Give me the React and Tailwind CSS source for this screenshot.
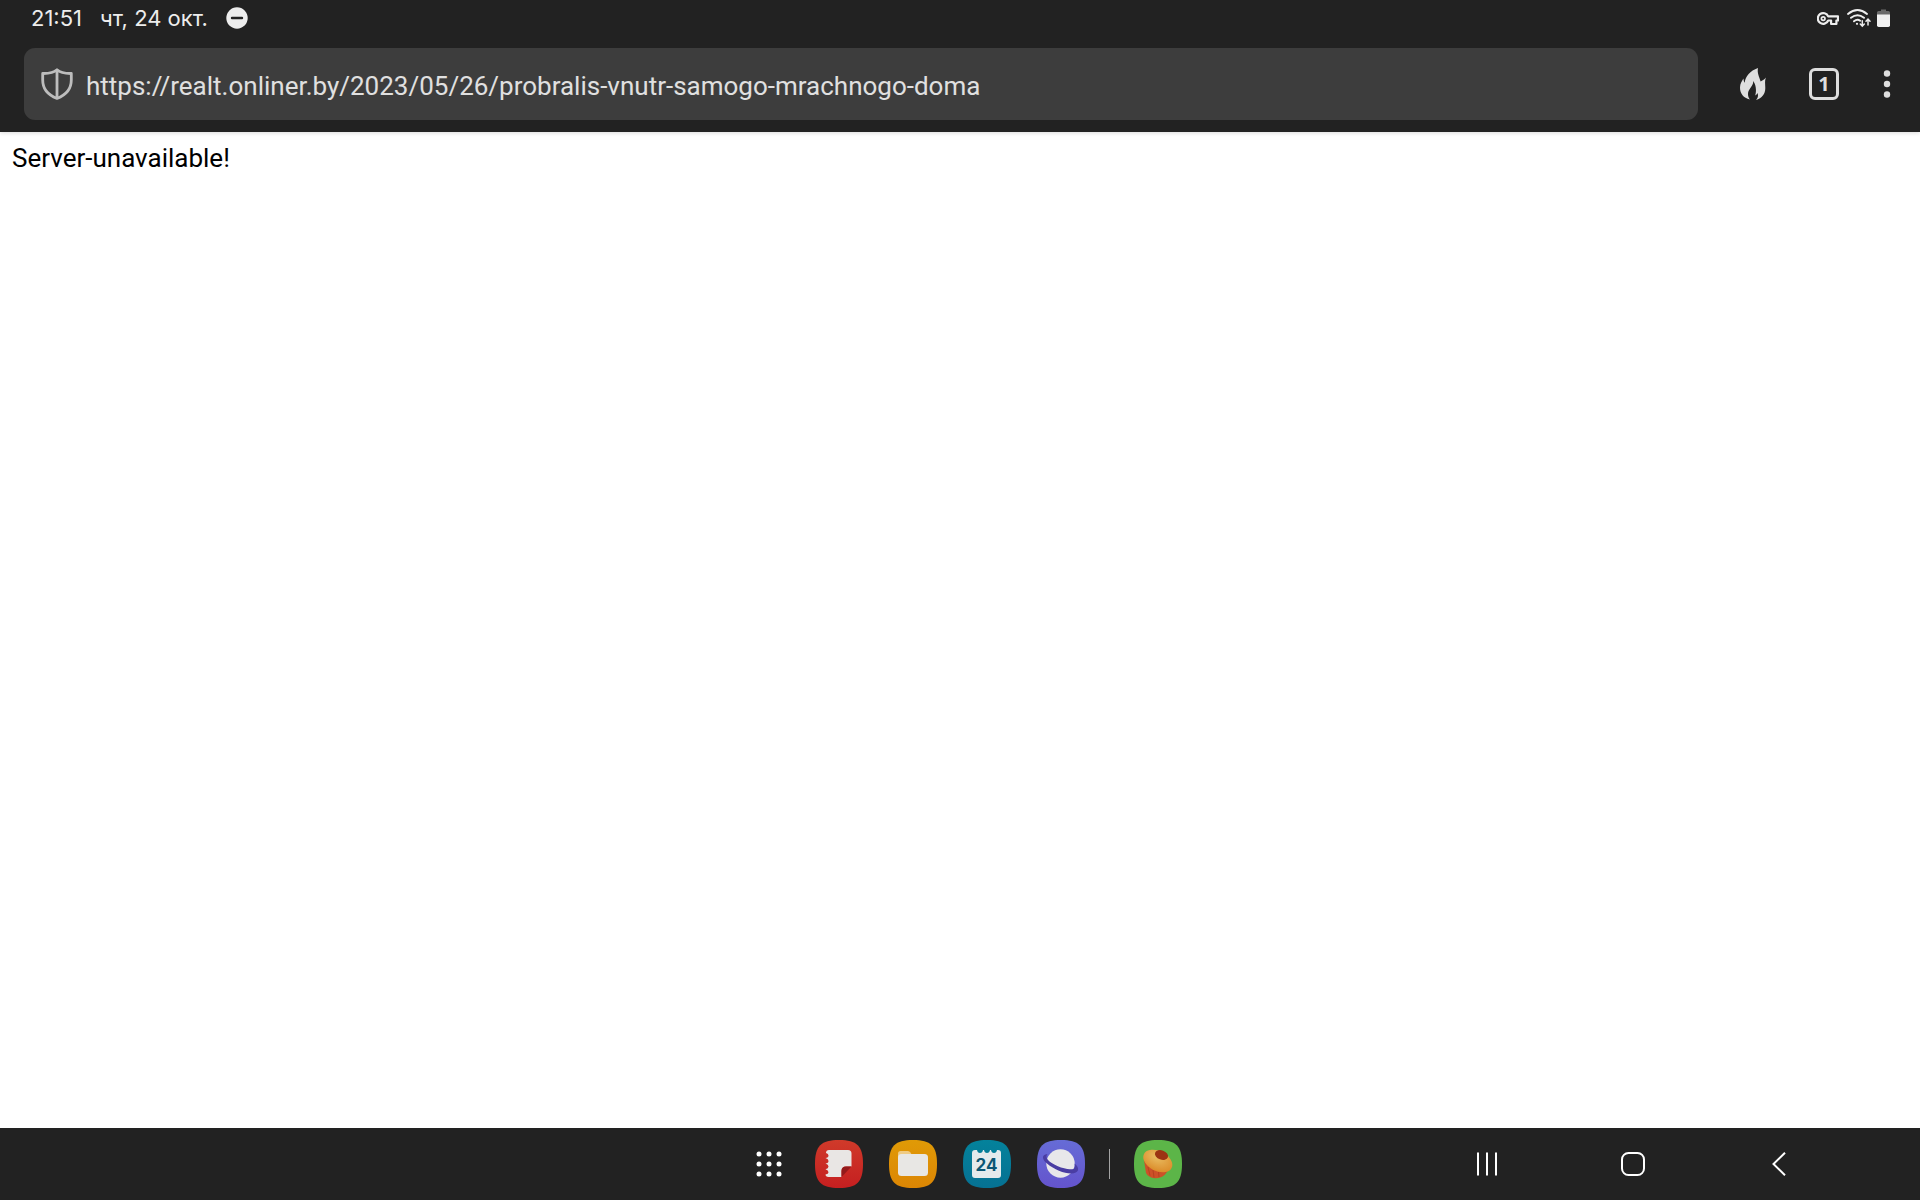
const SQUIRCLE = "M24 0C42 0 48 6 48 24S42 48 24 48 0 42 0 24 6 0 24 0Z";

function StatusBar() {
  return (
    <div className="flex h-9 items-center justify-between pl-[31px] pr-[30px] font-['Inter',sans-serif] text-[22px] leading-9 text-[#ededed]">
      <div className="flex items-center">
        <time>21:51</time>
        <span className="ml-[18px]">чт, 24 окт.</span>
        <svg className="ml-[18px] size-[22px]" viewBox="0 0 22 22" aria-hidden="true">
          <circle cx="11" cy="11" r="10.7" fill="#ededed" />
          <path d="M6 11h10" stroke="#222" strokeWidth="2.4" strokeLinecap="round" />
        </svg>
      </div>
      <div className="flex items-center">
        <svg className="h-5 w-[22px]" viewBox="0 0 22 20" fill="none" stroke="#ededed" aria-hidden="true">
          <path
            d="M11.2 8.4H21v4.1h-1.6V16h-5.3v-3.5h-2.9A5.4 5.4 0 1 1 11.2 8.4Z"
            strokeWidth="2.2"
            strokeLinejoin="round"
          />
          <circle cx="6.2" cy="10.6" r="1.8" strokeWidth="1.7" />
        </svg>
        <svg className="ml-2 h-5 w-6" viewBox="0 0 24 20" fill="none" stroke="#ededed" strokeLinecap="round" aria-hidden="true">
          <path d="M1 6Q10.5-1.8 20 6M4 9.8Q10.5 4.6 17 9.8M7 13.3Q10.2 10.6 13.2 12.8" strokeWidth="1.9" />
          <circle cx="10" cy="15.8" r="1.1" fill="#ededed" stroke="none" />
          <path d="M15.3 12.8v5M13.3 16l2 2.2 2-2.2M21 17v-5.4M19 13.2l2-2.2 2 2.2" strokeWidth="1.5" />
        </svg>
        <svg className="ml-1.5 h-5 w-[13px]" viewBox="0 0 13 20" aria-hidden="true">
          <path d="M4 1.5h5V3h2.500a1.500 1.500 0 0 1 1.500 1.500V7H0V4.500A1.500 1.500 0 0 1 1.500 3H4Z" fill="#6b6b6b" />
          <path d="M0 6.500h13v10.800a1.700 1.700 0 0 1-1.700 1.700H1.700A1.700 1.700 0 0 1 0 17.300Z" fill="#f1f1f1" />
        </svg>
      </div>
    </div>
  );
}

function Toolbar() {
  return (
    <div className="flex h-24 items-center pl-6 pr-[5px] text-[#dedede]">
      <label className="mr-[19px] flex h-[72px] flex-1 items-center rounded-[11px] bg-[#3d3d3d] pl-[17px]">
        <svg className="size-8 shrink-0" viewBox="0 0 32 32" fill="none" stroke="#bdbdbd" strokeWidth="2.8" strokeLinejoin="round" aria-hidden="true">
          <path d="M16 1.8C12.3 5.2 7.5 5.6 1.7 5.5V12c0 9 5.300 15 14.300 18.400C25 27 30.300 21 30.300 12V5.500C24.500 5.600 19.700 5.200 16 1.800Z" />
          <path d="M16 2v28" />
        </svg>
        <input
          type="text"
          aria-label="Address"
          defaultValue="https://realt.onliner.by/2023/05/26/probralis-vnutr-samogo-mrachnogo-doma"
          className="ml-[13px] h-full min-w-0 flex-1 bg-transparent pt-[3px] font-['Roboto',sans-serif] text-[26px] text-[#e0e0e0] outline-none"
        />
      </label>
      <button type="button" aria-label="Clear data" className="flex h-[72px] w-[72px] items-center justify-center">
        <svg className="h-8 w-[26px]" viewBox="0 0 26 32" fill="currentColor" aria-hidden="true">
          <path d="M18 0c-1 5 1 8 2.600 13.500 1.600-.8 3.600-1.800 5.300-4-1.400 3.500-.6 6-.6 10.500 0 6-3.300 10-9.300 12 1.200-1.200 2-2.800 2-4.500 0-.8-.2-1.600-.5-2.400-.5 1.200-1.200 1.900-2.300 2.400 1.600-5 .6-11-2-14.500.4 5.500-5.200 7.500-5.200 13 0 2.200.6 4 1.900 5.500C3.500 30 0 25.500 0 19.500 0 15.500 2 13 3.400 10.500c.2 2 .6 3.200 1.300 4.300C5.500 8 10 3 18 0Z" />
        </svg>
      </button>
      <button type="button" aria-label="Tabs" className="flex h-[72px] w-[70px] items-center justify-center">
        <span className="flex h-8 w-[30px] items-center justify-center rounded-md border-[3px] border-[#dedede] font-['Open_Sans',sans-serif] text-[20px] font-bold leading-none">
          1
        </span>
      </button>
      <button type="button" aria-label="Menu" className="flex h-[72px] w-14 items-center justify-center">
        <svg className="h-7 w-2" viewBox="0 0 8 28" fill="currentColor" aria-hidden="true">
          <circle cx="4" cy="3.5" r="3.2" />
          <circle cx="4" cy="14" r="3.2" />
          <circle cx="4" cy="24.5" r="3.2" />
        </svg>
      </button>
    </div>
  );
}

function NotesIcon() {
  return (
    <svg className="size-12" viewBox="0 0 48 48" aria-hidden="true">
      <defs>
        <linearGradient id="notes" x2="0" y2="1">
          <stop stopColor="#d03a2a" />
          <stop offset="1" stopColor="#c51f20" />
        </linearGradient>
      </defs>
      <path d={SQUIRCLE} fill="url(#notes)" />
      <path
        d="M14 10H33Q36.500 10 36.500 13.500V26.500H31Q26.500 26.500 26.500 31V37H13.500Q10.500 36.800 10.500 34.500 13.500 34 13.500 32.200T10.500 29.200Q13.500 28.500 13.500 26.500T10.500 23.500Q13.500 23 13.500 21T10.500 18Q13.500 17.500 13.500 15.500T11 13Q11 10 14 10Z"
        fill="#e9e6e4"
      />
      <path d="M36.500 26.500 26.500 37V31Q26.500 26.500 31 26.500Z" fill="#941a1b" />
    </svg>
  );
}

function FilesIcon() {
  return (
    <svg className="size-12" viewBox="0 0 48 48" aria-hidden="true">
      <defs>
        <linearGradient id="files" x2="0" y2="1">
          <stop stopColor="#e09a06" />
          <stop offset="1" stopColor="#dc8604" />
        </linearGradient>
      </defs>
      <path d={SQUIRCLE} fill="url(#files)" />
      <path d="M9 18V13.500Q9 11 11.500 11H19Q20.500 11 21.500 12.500L23 15V20H9Z" fill="#efcb83" />
      <rect x="9" y="14" width="30" height="22" rx="3.5" fill="#e8e7e4" />
    </svg>
  );
}

function CalendarIcon() {
  return (
    <svg className="size-12" viewBox="0 0 48 48" aria-hidden="true">
      <defs>
        <linearGradient id="calendar" x2="0" y2="1">
          <stop stopColor="#04829b" />
          <stop offset="1" stopColor="#067193" />
        </linearGradient>
      </defs>
      <path d={SQUIRCLE} fill="url(#calendar)" />
      <path
        d="M12 10H14Q14.500 13 17 13T20 10H21Q21.500 13 24 13T27 10H28Q28.500 13 31 13T34 10H35Q38 10 38 13V35Q38 38 35 38H12Q9 38 9 35V13Q9 10 12 10Z"
        fill="#e4eaec"
      />
      <text x="23.5" y="30.5" textAnchor="middle" fontSize="17" className="fill-[#0c5674] font-['Inter',sans-serif] font-bold">
        24
      </text>
    </svg>
  );
}

function InternetIcon() {
  return (
    <svg className="size-12" viewBox="0 0 48 48" aria-hidden="true">
      <defs>
        <linearGradient id="internet" x2="0" y2="1">
          <stop stopColor="#666cd6" />
          <stop offset="1" stopColor="#6454cd" />
        </linearGradient>
      </defs>
      <path d={SQUIRCLE} fill="url(#internet)" />
      <circle cx="23.5" cy="23.5" r="14.200" fill="#e8e7ea" />
      <path
        d="M10.500 14C4 14.500 5 19.500 10 23.500 17 29.500 27 33.500 34 33.500 42 33.500 43.500 28 37.500 23.500 38.500 27.500 38 29.500 33 29.300 26 29 15 24.500 11 20 9 17.500 9 16 10.500 14Z"
        fill="#4a3da3"
      />
    </svg>
  );
}

function MuffinIcon() {
  return (
    <svg className="size-12" viewBox="0 0 48 48" aria-hidden="true">
      <defs>
        <radialGradient id="muffin" cx="0.4" cy="0.35" r="0.7">
          <stop stopColor="#e9bd62" />
          <stop offset="1" stopColor="#db8a27" />
        </radialGradient>
      </defs>
      <path d={SQUIRCLE} fill="#5cb548" />
      <path d="M10 20 12 33Q14 37.500 21 38.300 27 38.500 31 34.500L36 28Z" fill="#cd5128" />
      <path d="M14 27 16 35.500M19 30 20 37.500M24.500 32 25 37" stroke="#b8431f" strokeWidth="1" />
      <ellipse cx="23.8" cy="21" rx="15.5" ry="10" transform="rotate(27 23.8 21)" fill="url(#muffin)" />
      <ellipse cx="27.5" cy="15" rx="6.800" ry="4.600" transform="rotate(20 27.5 15)" fill="#9c3413" />
    </svg>
  );
}

const apps = [
  { name: "Notes", Icon: NotesIcon },
  { name: "My Files", Icon: FilesIcon },
  { name: "Calendar", Icon: CalendarIcon },
  { name: "Internet", Icon: InternetIcon },
];

const dots = [3, 13, 23];

function Taskbar() {
  return (
    <footer className="flex h-[72px] items-center bg-[#222]">
      <div className="flex-1 pl-[68px]" />
      <div className="flex items-center pl-2.5">
        <div className="flex items-center gap-[26px]">
          <button type="button" aria-label="All apps" className="flex size-10 items-center justify-center">
            <svg className="size-[26px]" viewBox="0 0 26 26" fill="#fff" aria-hidden="true">
              {dots.map((y) => dots.map((x) => <circle key={`${x}-${y}`} cx={x} cy={y} r="2.5" />))}
            </svg>
          </button>
          {apps.map(({ name, Icon }) => (
            <button key={name} type="button" aria-label={name}>
              <Icon />
            </button>
          ))}
        </div>
        <div className="mx-6 h-[30px] w-px bg-[#a3a3a3]" />
        <button type="button" aria-label="Browser">
          <MuffinIcon />
        </button>
      </div>
      <nav className="flex flex-1 justify-end pr-[68px]">
        <button type="button" aria-label="Recents" className="flex h-[72px] w-[146px] items-center justify-center">
          <svg className="h-6 w-[22px]" viewBox="0 0 22 24" stroke="#fff" strokeWidth="2" aria-hidden="true">
            <path d="M2 .5v23M11 .5v23M20 .5v23" />
          </svg>
        </button>
        <button type="button" aria-label="Home" className="flex h-[72px] w-[146px] items-center justify-center">
          <svg className="size-6" viewBox="0 0 24 24" fill="none" stroke="#fff" strokeWidth="2" aria-hidden="true">
            <rect x="1" y="1" width="22" height="22" rx="6.5" />
          </svg>
        </button>
        <button type="button" aria-label="Back" className="flex h-[72px] w-[146px] items-center justify-center">
          <svg className="h-6 w-3.5" viewBox="0 0 14 24" fill="none" stroke="#fff" strokeWidth="2" aria-hidden="true">
            <path d="M13 .7 1.5 12 13 23.3" />
          </svg>
        </button>
      </nav>
    </footer>
  );
}

export default function App() {
  return (
    <div className="flex min-h-screen flex-col bg-white">
      <header className="bg-[#222] shadow-[0_1px_4px_rgba(0,0,0,0.15)]">
        <StatusBar />
        <Toolbar />
      </header>
      <main className="flex-1 px-3 py-2 font-['Roboto',sans-serif] text-[26px] leading-9 text-black">
        <p>Server-unavailable!</p>
      </main>
      <Taskbar />
    </div>
  );
}
